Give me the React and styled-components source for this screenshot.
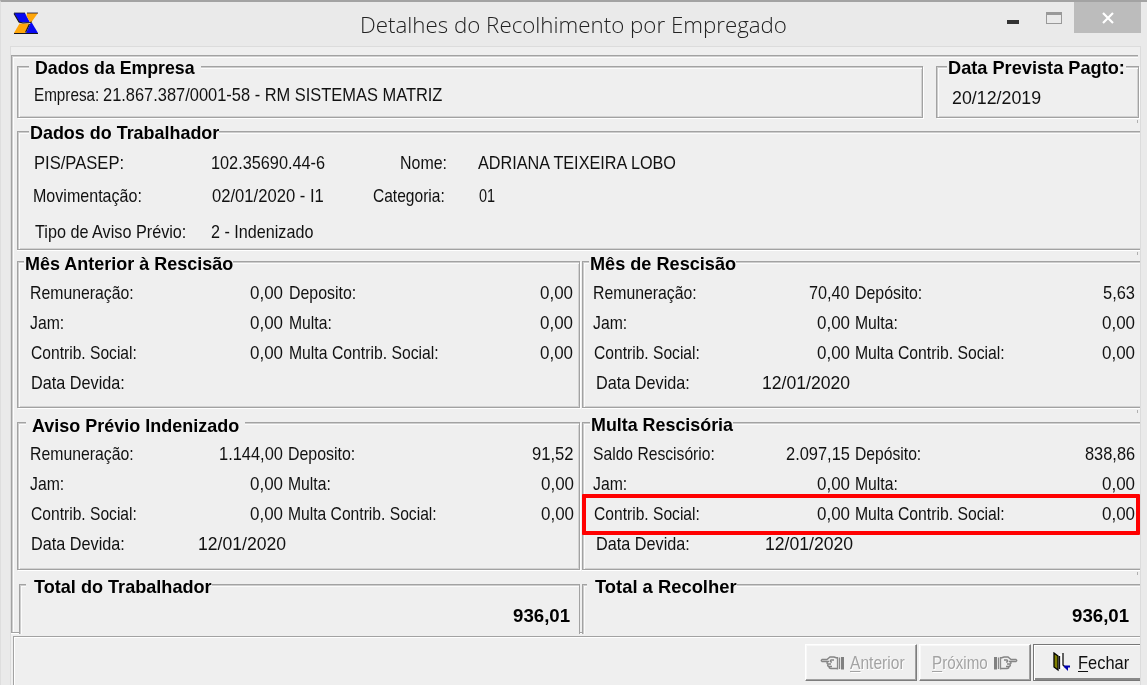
import React, { useLayoutEffect, useRef, useState } from 'react'
import styled, { createGlobalStyle, css } from 'styled-components'

const GlobalStyle = createGlobalStyle`
  body {
    margin: 0;
    overflow: hidden;
    background: #eaeaea;
    font-family: 'Liberation Sans', Arial, sans-serif;
  }
`

const dark = '#a2a2a2'

// the form font is narrow, so every text is squeezed to its own width
function Text({ w, ...rest }) {
  const ref = useRef(null)
  const [scale, setScale] = useState(1)

  useLayoutEffect(() => {
    setScale((w + 1) / ref.current.offsetWidth)
  }, [w])

  return (
    <TextBox $w={w} {...rest}>
      <TextInner ref={ref} style={{ transform: `scaleX(${scale})` }}>
        {rest.children}
      </TextInner>
    </TextBox>
  )
}

function Detail({ group }) {
  const { rows, date, dateLeft, inset, gap, end, top } = group
  return (
    <Rows $top={top}>
      {rows.map((r, i) => (
        <Row key={i} $h={30} $left={inset}>
          <Cell $w={group.first}>
            <Text w={r[1]} $left={i === 2 ? 1 : 0}>{r[0]}</Text>
            <Text w={r[3]}>{r[2]}</Text>
          </Cell>
          <Cell $w={end} $left={gap}>
            <Text w={r[5]}>{r[4]}</Text>
            <Text w={r[7]}>{r[6]}</Text>
          </Cell>
        </Row>
      ))}
      <Row $h={30} $left={group.dateInset}>
        <Text w={93}>Data Devida:</Text>
        {date && <Text w={87} $left={dateLeft}>{date}</Text>}
      </Row>
    </Rows>
  )
}

const mesAnterior = {
  inset: 12, first: 252, gap: 7, end: 283, top: 4, dateInset: 13,
  rows: [
    ['Remuneração:', 103, '0,00', 32, 'Deposito:', 66, '0,00', 32],
    ['Jam:', 33, '0,00', 32, 'Multa:', 42, '0,00', 32],
    ['Contrib. Social:', 105, '0,00', 32, 'Multa Contrib. Social:', 149, '0,00', 32],
  ],
}

const mesRescisao = {
  inset: 10, first: 256, gap: 6, end: 279, top: 4, dateInset: 13,
  date: '12/01/2020', dateLeft: 73,
  rows: [
    ['Remuneração:', 103, '70,40', 40, 'Depósito:', 66, '5,63', 31],
    ['Jam:', 33, '0,00', 32, 'Multa:', 42, '0,00', 32],
    ['Contrib. Social:', 105, '0,00', 32, 'Multa Contrib. Social:', 149, '0,00', 32],
  ],
}

const avisoPrevio = {
  inset: 12, first: 252, gap: 6, end: 285, top: 3, dateInset: 13,
  date: '12/01/2020', dateLeft: 74,
  rows: [
    ['Remuneração:', 103, '1.144,00', 63, 'Deposito:', 66, '91,52', 41],
    ['Jam:', 33, '0,00', 32, 'Multa:', 42, '0,00', 32],
    ['Contrib. Social:', 105, '0,00', 32, 'Multa Contrib. Social:', 148, '0,00', 32],
  ],
}

const multaRescisoria = {
  inset: 10, first: 256, gap: 6, end: 279, top: 4, dateInset: 13,
  date: '12/01/2020', dateLeft: 76,
  rows: [
    ['Saldo Rescisório:', 121, '2.097,15', 63, 'Depósito:', 65, '838,86', 49],
    ['Jam:', 33, '0,00', 32, 'Multa:', 42, '0,00', 32],
    ['Contrib. Social:', 105, '0,00', 32, 'Multa Contrib. Social:', 149, '0,00', 32],
  ],
}

function Logo() {
  return (
    <svg width="26" height="23" viewBox="0 0 26 23">
      <path d="M1 1H12L17 10.500H6.500Z" fill="#0909f2" />
      <path d="M14 1H25L18.500 10H17L13.500 4Z" fill="#ffa60a" />
      <path d="M6.500 11.500H16.500L12 21H1Z" fill="#ffa60a" />
      <path d="M17.500 11H19L25 21H13Z" fill="#0909f2" />
      <path d="M1 1H12M14 1H25" stroke="#15153a" strokeWidth="0.800" />
      <path d="M1 1.500 6 10 10 11 17 10.500 19 10M1 21.500H25M16.500 12 12.500 20.500" fill="none" stroke="#15151f" strokeWidth="1.200" />
    </svg>
  )
}

function Hand({ flip }) {
  return (
    <HandSvg $flip={flip} width="25" height="16" viewBox="0 0 25 16">
      <path
        d="M17 3 14 2H10L7 4.500H2Q.5 5.500 2 6.500H9M8 6.500Q6 8 8 9H11M8 9Q7 11 9 11.500H12M9 11.500Q9 13.500 11 13.500H17M14 5H11Q9 7 12 7"
        fill="none"
        stroke="#858585"
        strokeWidth="1.400"
      />
      <path d="M17.500 2V14.500M19.500 2.500V14" stroke="#8a8a8a" strokeWidth="1.300" />
      <path d="M21 2H24V14.500H21Z" fill="#808080" />
    </HandSvg>
  )
}

function Door() {
  return (
    <svg width="18" height="21" viewBox="0 0 18 21">
      <path d="M6 2H10V17H6Z" fill="#fff" />
      <path d="M1 1 5 4V18L1 15Z" fill="#808000" stroke="#000" strokeWidth="1.300" />
      <path d="M6.500 4V17M10 1V13L12 15" fill="none" stroke="#111" strokeWidth="1.300" />
      <path d="M11 13.500H17V15.500H15V19L11 15Z" fill="#0000b0" />
    </svg>
  )
}

function App() {
  return (
    <>
      <GlobalStyle />
      <Window>
        <TitleBar>
          <Logo />
          <Title>
            <Text w={426}>Detalhes do Recolhimento por Empregado</Text>
          </Title>
          <Minimize />
          <Maximize />
          <Close>
            <svg width="12" height="12" viewBox="0 0 12 12">
              <path d="M1 1 11 11M11 1 1 11" stroke="#fff" strokeWidth="2.200" />
            </svg>
          </Close>
        </TitleBar>

        <Client>
          <Panel>
            <Line>
              <Group $w={906} $h={52}>
                <Caption $top={-9} $left={11} $pad="0 7px 0 6px"><Text w={159}>Dados da Empresa</Text></Caption>
                <Row $h={34} $left={16}>
                  <Text w={64}>Empresa:</Text>
                  <Text w={338} $left={5}>21.867.387/0001-58 - RM SISTEMAS MATRIZ</Text>
                </Row>
              </Group>
              <Group $w={203} $h={52} $ml={13}>
                <Caption $top={-9} $left={10} $pad="0 2px 0 1px"><Text w={176}>Data Prevista Pagto:</Text></Caption>
                <Row $h={40} $left={15}>
                  <Text w={88}>20/12/2019</Text>
                </Row>
              </Group>
            </Line>
            <Spacer $h={13} />

            <Group $w={1123} $h={119} $open>
              <Caption $top={-9} $left={11} $pad="0 1px"><Text w={188}>Dados do Trabalhador</Text></Caption>
              <Row $h={40} $left={16}>
                <Text w={89}>PIS/PASEP:</Text>
                <Text w={113} $left={88}>102.35690.44-6</Text>
                <Text w={46} $left={76}>Nome:</Text>
                <Text w={197} $left={32}>ADRIANA TEIXEIRA LOBO</Text>
              </Row>
              <Row $h={26} $left={15}>
                <Text w={108}>Movimentação:</Text>
                <Text w={111} $left={71}>02/01/2020 - I1</Text>
                <Text w={71} $left={50}>Categoria:</Text>
                <Text w={15} $left={35}>01</Text>
              </Row>
              <Row $h={46} $left={17}>
                <Text w={150}>Tipo de Aviso Prévio:</Text>
                <Text w={101} $left={26}>2 - Indenizado</Text>
              </Row>
            </Group>
            <Spacer $h={11} />

            <Line>
              <Group $w={563} $h={147}>
                <Caption $top={-8} $left={6} $pad="0 1px"><Text w={207}>Mês Anterior à Rescisão</Text></Caption>
                <Detail group={mesAnterior} />
              </Group>
              <Group $w={558} $h={147} $ml={2} $open>
                <Caption $top={-8} $left={6} $pad="0 1px"><Text w={145}>Mês de Rescisão</Text></Caption>
                <Detail group={mesRescisao} />
              </Group>
            </Line>
            <Spacer $h={14} />

            <Line>
              <Group $w={563} $h={148}>
                <Caption $top={-7} $left={8} $pad="0 7px 0 6px"><Text w={206}>Aviso Prévio Indenizado</Text></Caption>
                <Detail group={avisoPrevio} />
              </Group>
              <Group $w={558} $h={148} $ml={2} $open>
                <Caption $top={-8} $left={7} $pad="0 1px"><Text w={141}>Multa Rescisória</Text></Caption>
                <Detail group={multaRescisoria} />
                <Highlight />
              </Group>
            </Line>
            <Spacer $h={14} />

            <Line>
              <Group $w={561} $h={50} $ml={2} $noBottom>
                <Caption $top={-8} $left={6} $pad="0 1px 0 8px"><Text w={177}>Total do Trabalhador</Text></Caption>
                <Total $right={10}><Text w={56}>936,01</Text></Total>
              </Group>
              <Group $w={558} $h={50} $ml={2} $open $noBottom>
                <Caption $top={-8} $left={4} $pad="0 1px 0 8px"><Text w={141}>Total a Recolher</Text></Caption>
                <Total $right={12}><Text w={56}>936,01</Text></Total>
              </Group>
            </Line>
          </Panel>

          <Footer>
            <Button $w={112} $pad={14} disabled>
              <Hand />
              <Text w={54} $left={5}><u>A</u>nterior</Text>
            </Button>
            <Button $w={112} $pad={12} disabled>
              <Text w={55}><u>P</u>róximo</Text>
              <Hand flip />
            </Button>
            <Button $w={112} $pad={19} $default>
              <Door />
              <Text w={50} $left={7}><u>F</u>echar</Text>
            </Button>
          </Footer>
        </Client>
      </Window>
    </>
  )
}

const TextBox = styled.div`
  flex: none;
  width: ${(p) => p.$w}px;
  margin-left: ${(p) => p.$left || 0}px;
  white-space: nowrap;
`

const TextInner = styled.span`
  display: inline-block;
  transform-origin: 0 50%;
`

const Window = styled.div`
  box-sizing: border-box;
  width: 1147px;
  height: 685px;
  display: flex;
  flex-direction: column;
  overflow: hidden;
  background: #eaeaea;
  border-top: 2px solid #a3a3a3;
  border-left: 1px solid #dedede;
`

const TitleBar = styled.div`
  height: 44px;
  flex: none;
  display: flex;
  align-items: flex-start;
  padding-left: 12px;

  > svg {
    margin-top: 10px;
  }
`

const Title = styled.div`
  width: 426px;
  margin-left: 321px;
  padding-top: 7px;
  font-family: 'Open Sans', 'Noto Sans', sans-serif;
  font-size: 22px;
  font-weight: 300;
  line-height: 30px;
  color: #222;
`

const Minimize = styled.div`
  width: 12px;
  height: 4px;
  margin: 18px 0 0 221px;
  background: #333;
`

const Maximize = styled.div`
  box-sizing: border-box;
  width: 16px;
  height: 12px;
  margin: 10px 0 0 27px;
  border: 1px solid #999;
  border-top-width: 3px;
`

const Close = styled.div`
  width: 67px;
  height: 31px;
  margin-left: 12px;
  display: flex;
  align-items: center;
  justify-content: center;
  background: #bcbcbc;
`

const Client = styled.div`
  box-sizing: border-box;
  width: 1131px;
  flex: 1;
  margin-left: 9px;
  border: solid #dcdcdc;
  border-width: 1px 1px 0;
  background: #efefef;
  overflow: hidden;
  font-size: 19px;
  line-height: 20px;
  color: #111;
`

const Panel = styled.div`
  box-sizing: border-box;
  width: 1127px;
  height: 578px;
  margin-top: 8px;
  padding: 10px 0 0 5px;
  border: solid ${dark};
  border-width: 1px 0 1px 1px;
  box-shadow: inset 1px 1px 0 #cfcfcf, inset 2px 2px 0 #fdfdfd, 0 1px 0 #fff;
`

const Line = styled.div`
  display: flex;
`

const Group = styled.div`
  box-sizing: border-box;
  position: relative;
  flex: none;
  width: ${(p) => p.$w}px;
  height: ${(p) => p.$h}px;
  margin-left: ${(p) => p.$ml || 0}px;
  background: #efefef;
  border: 1px solid ${dark};
  box-shadow: 1px 1px 0 #fff, inset 1px 1px 0 #cdcdcd, inset 2px 2px 0 #fbfbfb, inset -1px -1px 0 #d2d2d2;
  ${(p) => p.$open && css`
    border-right: 0;
    box-shadow: 0 1px 0 #fff, inset 1px 1px 0 #cdcdcd, inset 2px 2px 0 #fbfbfb, inset 0 -1px 0 #d2d2d2;
  `}
  ${(p) => p.$noBottom && css`
    border-bottom: 0;
    box-shadow: inset 1px 1px 0 #cdcdcd, inset 2px 2px 0 #fbfbfb;
  `}
`

const Caption = styled.div`
  width: fit-content;
  height: 20px;
  margin: ${(p) => p.$top}px 0 0 ${(p) => p.$left}px;
  padding: ${(p) => p.$pad};
  background: #efefef;
  font-size: 18.500px;
  font-weight: bold;
  color: #000;
`

// gap between the groups, shows a bit of the panel's right edge
const Spacer = styled.div`
  height: ${(p) => p.$h}px;
  width: 1121px;
  display: flex;
  justify-content: flex-end;

  &::after {
    content: '';
    width: 1px;
    height: 3px;
    margin-top: 2px;
    background: #b0b0b0;
  }
`

const Rows = styled.div`
  padding-top: ${(p) => p.$top}px;
`

const Row = styled.div`
  height: ${(p) => p.$h}px;
  display: flex;
  align-items: center;
  padding-left: ${(p) => p.$left}px;
`

const Cell = styled.div`
  width: ${(p) => p.$w}px;
  margin-left: ${(p) => p.$left || 0}px;
  display: flex;
  justify-content: space-between;
`

const Total = styled.div`
  height: 38px;
  display: flex;
  align-items: center;
  justify-content: flex-end;
  padding-right: ${(p) => p.$right}px;
  font-weight: bold;
  color: #000;
`

const Highlight = styled.div`
  position: absolute;
  left: -1px;
  top: 71px;
  box-sizing: border-box;
  width: 558px;
  height: 41px;
  border: 4px solid #ff0000;
  border-radius: 1px;
`

const Footer = styled.div`
  box-sizing: border-box;
  width: 1145px;
  height: 60px;
  margin: 3px 0 0 2px;
  padding: 7px 0 0 791px;
  display: flex;
  align-items: flex-start;
  gap: 2px;
  border: solid ${dark};
  border-width: 1px 0 0 1px;
  box-shadow: inset 1px 1px 0 #fff;
`

const Button = styled.button`
  box-sizing: border-box;
  flex: none;
  width: ${(p) => p.$w}px;
  height: 37px;
  padding: 0 0 0 ${(p) => p.$pad}px;
  display: flex;
  align-items: center;
  background: #efefef;
  border: 1px solid;
  border-color: #fff #7d7d7d #7d7d7d #fff;
  box-shadow: inset -1px -1px 0 #a2a2a2, inset 1px 1px 0 #f8f8f8;
  font-family: inherit;
  font-size: 19px;
  line-height: 20px;
  text-align: left;
  color: #111;

  &:disabled {
    color: #a3a3a3;
    text-shadow: 1px 1px 0 #fff;
  }

  u {
    text-underline-offset: 2px;
    text-decoration-thickness: 1px;
  }

  ${(p) => p.$default && css`
    border-color: #777;
    box-shadow: inset 1px 1px 0 #fff, inset 0 -2px 0 #888;
  `}
`

const HandSvg = styled.svg`
  flex: none;
  ${(p) => p.$flip && css`
    transform: scaleX(-1);
    margin-left: 6px;
  `}
`

export default App
